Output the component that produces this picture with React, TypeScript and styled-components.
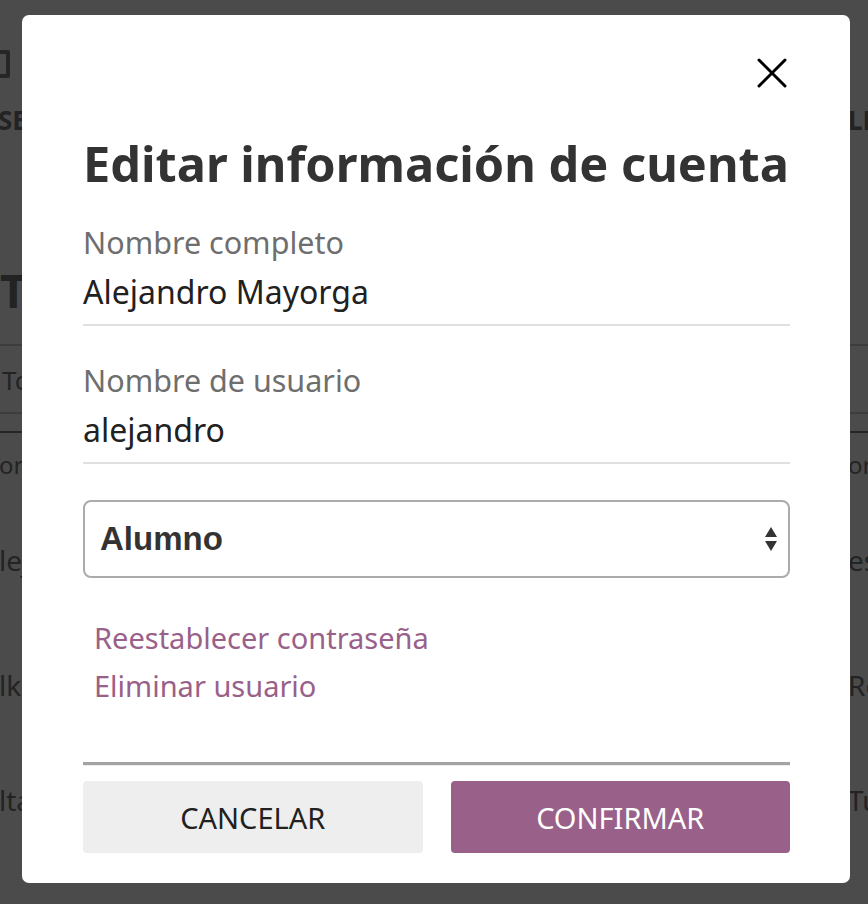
import styled, { createGlobalStyle } from "styled-components";

const GlobalStyle = createGlobalStyle`
  html, body {
    margin: 0;
    padding: 0;
    height: 100%;
    overflow: hidden;
  }
  body {
    font-family: "Noto Sans", "Open Sans", sans-serif;
    background: #4b4b4b;
  }
`;

function App() {
  return (
    <>
      <GlobalStyle />
      <Page>
        <TopBar>
          <SquareIcon />
        </TopBar>
        <BgRow $top={22} $size={26} $weight={700}>
          <BgLeft $shift={-2}>SESIONES</BgLeft>
          <BgRight>LECCIONES</BgRight>
        </BgRow>
        <BgRow $top={120} $size={46} $weight={700} $lh={60}>
          <BgLeft $shift={0}>Todos</BgLeft>
        </BgRow>
        <Rule $top={24} />
        <BgRow $top={12} $size={26} $lh={44}>
          <BgLeft $shift={2}>Todos</BgLeft>
        </BgRow>
        <Rule $top={10} />
        <Rule $top={17} $dark />
        <BgRow $top={12} $size={24}>
          <BgLeft $shift={-1}>orden</BgLeft>
          <BgRight>orden</BgRight>
        </BgRow>
        <BgRow $top={55}>
          <BgLeft $shift={-1}>lejandro</BgLeft>
          <BgRight>estudiante</BgRight>
        </BgRow>
        <BgRow $top={85}>
          <BgLeft $shift={-1}>lkira</BgLeft>
          <BgRight>Rol</BgRight>
        </BgRow>
        <BgRow $top={75}>
          <BgLeft $shift={-1}>ltair</BgLeft>
          <BgRight>Tutor</BgRight>
        </BgRow>
      </Page>

      <Overlay>
        <Modal>
          <CloseRow>
            <CloseButton aria-label="Cerrar">
              <svg width="30" height="30" viewBox="0 0 30 30">
                <path
                  d="M2 2 L28 28 M28 2 L2 28"
                  stroke="#000"
                  strokeWidth="3"
                  strokeLinecap="round"
                />
              </svg>
            </CloseButton>
          </CloseRow>
          <Title>Editar información de cuenta</Title>

          <Field>
            <Label>Nombre completo</Label>
            <Value>Alejandro Mayorga</Value>
          </Field>
          <Field>
            <Label>Nombre de usuario</Label>
            <Value>alejandro</Value>
          </Field>

          <SelectBox>
            <SelectText>Alumno</SelectText>
            <svg width="14" height="26" viewBox="0 0 14 26">
              <path d="M7 1 L13 11 L1 11 Z" fill="#333" />
              <path d="M1 15 L13 15 L7 25 Z" fill="#333" />
            </svg>
          </SelectBox>

          <Links>
            <LinkText>Reestablecer contraseña</LinkText>
            <LinkText>Eliminar usuario</LinkText>
          </Links>

          <Divider />

          <Actions>
            <Button>CANCELAR</Button>
            <Button $primary>CONFIRMAR</Button>
          </Actions>
        </Modal>
      </Overlay>
    </>
  );
}
export default App;

const Page = styled.div`
  display: flex;
  flex-direction: column;
  color: #232323;
  height: 904px;
  overflow: hidden;
`;

const TopBar = styled.div`
  height: 78px;
  display: flex;
  align-items: flex-end;
`;

const SquareIcon = styled.div`
  width: 22px;
  height: 28px;
  margin-left: -12px;
  border: 4px solid #262626;
  box-sizing: border-box;
  border-radius: 2px;
`;

const BgRow = styled.div<{ $top: number; $size?: number; $weight?: number; $lh?: number }>`
  display: flex;
  margin-top: ${(p) => p.$top}px;
  font-size: ${(p) => p.$size ?? 28}px;
  font-weight: ${(p) => p.$weight ?? 400};
  line-height: ${(p) => p.$lh ?? 40}px;
  white-space: nowrap;
`;

const BgLeft = styled.span<{ $shift: number }>`
  flex: 0 0 auto;
  width: 848px;
  margin-left: ${(p) => p.$shift}px;
  margin-right: ${(p) => -p.$shift}px;
`;

const BgRight = styled.span`
  flex: 0 0 auto;
`;

const Rule = styled.div<{ $top: number; $dark?: boolean }>`
  flex: 0 0 auto;
  height: 2px;
  background: ${(p) => (p.$dark ? "#262626" : "#3c3c3c")};
  margin-top: ${(p) => p.$top}px;
`;

const Overlay = styled.div`
  position: fixed;
  inset: 0;
  display: flex;
  align-items: center;
  justify-content: center;
`;

const Modal = styled.div`
  width: 828px;
  height: 868px;
  box-sizing: border-box;
  margin-left: 4px;
  margin-top: -6px;
  padding: 36px 60px 30px 61px;
  background: #fff;
  border-radius: 7px;
  display: flex;
  flex-direction: column;
`;

const CloseRow = styled.div`
  display: flex;
  justify-content: flex-end;
  margin-right: -4px;
`;

const CloseButton = styled.button`
  width: 44px;
  height: 44px;
  border: none;
  background: transparent;
  padding: 0;
  display: flex;
  align-items: center;
  justify-content: center;
  cursor: pointer;
`;

const Title = styled.h1`
  margin: 35px 0 26px;
  font-size: 48.7px;
  font-weight: 700;
  line-height: 66px;
  color: #333;
  white-space: nowrap;
`;

const Field = styled.div`
  display: flex;
  flex-direction: column;
  border-bottom: 2px solid #e0e0e0;
  margin-bottom: 34px;
  padding-bottom: 8px;
`;

const Label = styled.div`
  font-size: 30.5px;
  line-height: 40px;
  color: #6e6e6e;
`;

const Value = styled.div`
  font-size: 32px;
  line-height: 48px;
  margin-top: 6px;
  color: #212121;
`;

const SelectBox = styled.div`
  height: 78px;
  margin-top: 2px;
  box-sizing: border-box;
  border: 2px solid #ababab;
  border-radius: 8px;
  display: flex;
  align-items: center;
  justify-content: space-between;
  padding: 0 10px 0 15px;
`;

const SelectText = styled.span`
  font-family: "Liberation Sans", Arial, sans-serif;
  font-size: 33px;
  font-weight: 700;
  color: #333;
`;

const Links = styled.div`
  display: flex;
  flex-direction: column;
  margin-top: 36px;
  padding-left: 11px;
`;

const LinkText = styled.a`
  font-size: 29px;
  line-height: 48px;
  color: #996189;
  cursor: pointer;
`;

const Divider = styled.div`
  margin-top: 52px;
  height: 3px;
  background: #a3a3a3;
  border-bottom: 1px solid #eeeeee;
`;

const Actions = styled.div`
  display: grid;
  grid-template-columns: 1fr 1fr;
  gap: 28px;
  margin-top: 15px;
`;

const Button = styled.button<{ $primary?: boolean }>`
  height: 72px;
  border: none;
  border-radius: 4px;
  font-family: "Noto Sans", "Open Sans", sans-serif;
  font-size: 29px;
  background: ${(p) => (p.$primary ? "#996189" : "#eeeeee")};
  color: ${(p) => (p.$primary ? "#ffffff" : "#212121")};
  cursor: pointer;
`;
